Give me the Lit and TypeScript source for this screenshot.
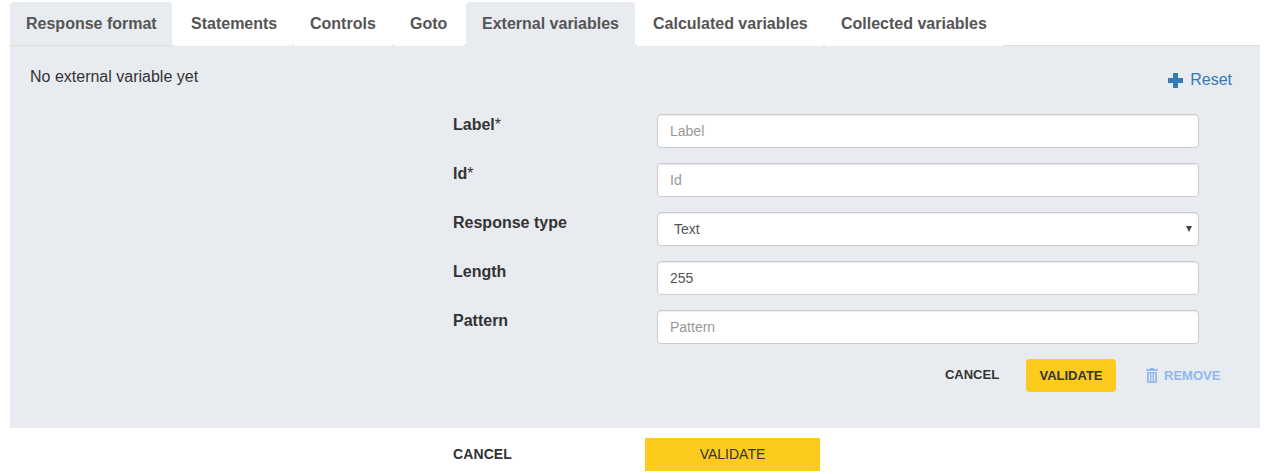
import { LitElement, css, html, svg } from 'lit'
import { customElement } from 'lit/decorators.js'

const TABS = [
  { label: "Response format", width: 162, active: true, focused: true },
  { label: "Statements", width: 117 },
  { label: "Controls", width: 98 },
  { label: "Goto", width: 70 },
  { label: "External variables", width: 169, active: true },
  { label: "Calculated variables", width: 186 },
  { label: "Collected variables", width: 178 },
];

const trash = svg`<path fill="currentColor" d="M5 0h4l.6 1.2H13V3H1V1.200h3.400zM2 4h10v10.500a.5.5 0 0 1-.5.5h-9a.5.5 0 0 1-.5-.5zm1.800 1.500v8h1.200v-8zm2.600 0v8h1.200v-8zm2.600 0v8h1.200v-8z"/>`;

@customElement("app-root")
export class AppRoot extends LitElement {
  render() {
    return html`
      <div class="page">
        <ul class="tabs">
          ${TABS.map((t) => html`
            <li class="tab ${t.active ? "active" : ""} ${t.focused ? "focused" : ""}" style="width:${t.width}px">${t.label}</li>
          `)}
        </ul>
        <section class="panel">
          <div class="panel-head">
            <span class="empty">No external variable yet</span>
            <a class="reset"><span class="plus"></span>Reset</a>
          </div>
          <form class="form">
            <label>Label<span class="req">*</span></label>
            <input placeholder="Label" />
            <label>Id<span class="req">*</span></label>
            <input placeholder="Id" />
            <label>Response type</label>
            <div class="select"><span>Text</span><i class="caret"></i></div>
            <label>Length</label>
            <input value="255" />
            <label>Pattern</label>
            <input placeholder="Pattern" />
          </form>
          <div class="actions">
            <button type="button" class="btn-cancel">CANCEL</button>
            <button type="button" class="btn-validate">VALIDATE</button>
            <button type="button" class="btn-remove">
              <svg width="14" height="15" viewBox="0 0 14 15">${trash}</svg>REMOVE
            </button>
          </div>
        </section>
        <div class="footer">
          <button type="button" class="foot-cancel">CANCEL</button>
          <button type="button" class="foot-validate">VALIDATE</button>
        </div>
      </div>
    `;
  }

  static styles = css`
    :host {
      display: block;
      font-family: "Liberation Sans", Arial, sans-serif;
      color: #333;
    }
    * {
      box-sizing: border-box;
    }
    .page {
      padding: 2px 9px 0 10px;
    }

    .tabs {
      display: flex;
      gap: 2px;
      list-style: none;
      margin: 0;
      padding: 0;
      height: 44px;
      border-bottom: 1px solid #ddd;
    }
    .tab {
      flex: none;
      height: 44px;
      padding: 12px 0 0 16px;
      font-size: 16px;
      font-weight: 700;
      line-height: 20px;
      white-space: nowrap;
      color: #555;
      background: #fff;
      border-radius: 4px 4px 0 0;
    }
    .tab.active {
      background: #e8ebf0;
    }
    .tab.focused {
      margin-right: 1px;
      border-bottom: 1px solid #ddd;
    }

    .panel {
      height: 382px;
      background: #e8ebf0;
      padding: 21px 28px 0 20px;
    }
    .panel-head {
      display: flex;
      justify-content: space-between;
      align-items: flex-start;
    }
    .empty {
      font-size: 16px;
      line-height: 20px;
    }
    .reset {
      display: flex;
      align-items: center;
      gap: 7px;
      margin-top: 3px;
      font-size: 16px;
      line-height: 20px;
      color: #337ab7;
    }
    .plus {
      width: 15px;
      height: 15px;
      background:
        linear-gradient(#337ab7, #337ab7) center / 15px 5px no-repeat,
        linear-gradient(#337ab7, #337ab7) center / 5px 15px no-repeat;
    }

    .form {
      display: grid;
      grid-template-columns: 204px 542px;
      grid-auto-rows: 34px;
      row-gap: 15px;
      margin: 24px 0 0 423px;
    }
    label {
      padding-top: 1px;
      font-size: 16px;
      font-weight: 700;
      line-height: 20px;
    }
    .req {
      font-weight: 400;
    }
    input,
    .select {
      width: 100%;
      height: 34px;
      padding: 6px 12px;
      font-family: inherit;
      font-size: 14px;
      line-height: 20px;
      color: #555;
      background: #fff;
      border: 1px solid #ccc;
      border-radius: 4px;
      box-shadow: inset 0 1px 1px rgba(0, 0, 0, 0.075);
    }
    input::placeholder {
      color: #999;
      opacity: 1;
    }
    .select {
      display: flex;
      align-items: center;
      justify-content: space-between;
      padding: 0 6px 0 16px;
    }
    .caret {
      width: 0;
      height: 0;
      border-left: 3px solid transparent;
      border-right: 3px solid transparent;
      border-top: 6px solid #444;
    }

    .actions {
      display: flex;
      align-items: center;
      margin: 15px 0 0 906px;
    }
    button {
      border: 0;
      background: none;
      padding: 0;
      font-family: inherit;
    }
    .btn-cancel {
      width: 72px;
      margin-right: 18px;
      padding-bottom: 1px;
      font-size: 13px;
      font-weight: 700;
      line-height: 20px;
      color: #333;
    }
    .btn-validate {
      width: 90px;
      height: 33px;
      margin-right: 29px;
      padding-bottom: 1px;
      font-size: 13px;
      font-weight: 700;
      color: #333;
      background: #fccb1e;
      border-radius: 4px;
    }
    .btn-remove {
      display: flex;
      align-items: center;
      gap: 5px;
      font-size: 13px;
      font-weight: 700;
      color: #8fb8ee;
    }

    .footer {
      display: flex;
      align-items: center;
      margin: 10px 0 0 443px;
    }
    .foot-cancel {
      width: 192px;
      padding-bottom: 2px;
      text-align: left;
      font-size: 14px;
      font-weight: 700;
      letter-spacing: 0.1px;
      color: #333;
    }
    .foot-validate {
      width: 175px;
      height: 33px;
      padding-bottom: 2px;
      font-size: 14px;
      color: #333;
      background: #fccb1e;
    }
  `;
}

declare global {
  interface HTMLElementTagNameMap {
    "app-root": AppRoot,
  }
}
